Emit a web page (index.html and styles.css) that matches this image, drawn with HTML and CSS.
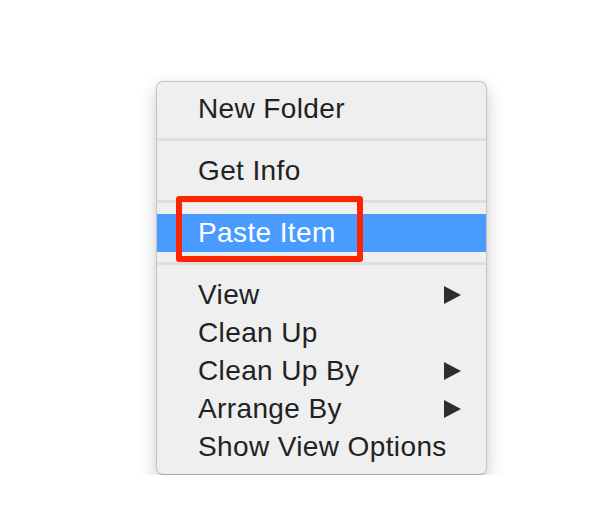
FILE: index.html
```html
<!DOCTYPE html>
<html>
<head>
<meta charset="utf-8">
<link rel="stylesheet" href="styles.css">
</head>
<body>
<div class="menu">
  <div class="item"><span>New Folder</span></div>
  <div class="sep"></div>
  <div class="item"><span>Get Info</span></div>
  <div class="sep"></div>
  <div class="item selected"><span>Paste Item</span><div class="callout"></div></div>
  <div class="sep"></div>
  <div class="item"><span>View</span><svg class="arrow" width="17" height="18" viewBox="0 0 17 18"><polygon points="0,0 17,9 0,18"/></svg></div>
  <div class="item"><span>Clean Up</span></div>
  <div class="item"><span>Clean Up By</span><svg class="arrow" width="17" height="18" viewBox="0 0 17 18"><polygon points="0,0 17,9 0,18"/></svg></div>
  <div class="item"><span>Arrange By</span><svg class="arrow" width="17" height="18" viewBox="0 0 17 18"><polygon points="0,0 17,9 0,18"/></svg></div>
  <div class="item"><span>Show View Options</span></div>
</div>
</body>
</html>
```
FILE: styles.css
```css
html, body {
  margin: 0;
  padding: 0;
  background: #ffffff;
}
body {
  font-family: "Liberation Sans", Arial, sans-serif;
}
.menu {
  margin: 81px 0 0 156px;
  width: 329px;
  padding: 8px 0;
  background: #efefef;
  border: 1px solid #c6c6c6;
  border-bottom-color: #a9a9a9;
  border-radius: 7px;
  box-shadow: 0 7px 18px rgba(0, 0, 0, 0.2), 0 0 3px rgba(0, 0, 0, 0.06);
  display: flex;
  flex-direction: column;
}
.item {
  position: relative;
  height: 38px;
  line-height: 38px;
  padding: 0 25px 0 41px;
  display: flex;
  justify-content: space-between;
  align-items: center;
  font-size: 28px;
  letter-spacing: 0.38px;
  color: #222222;
}
.item span {
  line-height: 38px;
}
.item.selected {
  background: #4a9bff;
  color: #ffffff;
}
.arrow {
  fill: #2e2e2e;
  display: block;
}
.sep {
  height: 24px;
  display: flex;
  flex-direction: column;
  padding-top: 10px;
  box-sizing: border-box;
}
.sep::before {
  content: "";
  height: 3px;
  background: #dedede;
}
.callout {
  position: absolute;
  left: 19px;
  top: -18px;
  width: 175px;
  height: 54px;
  border: 6px solid #ff2400;
  border-radius: 3px;
}
```
